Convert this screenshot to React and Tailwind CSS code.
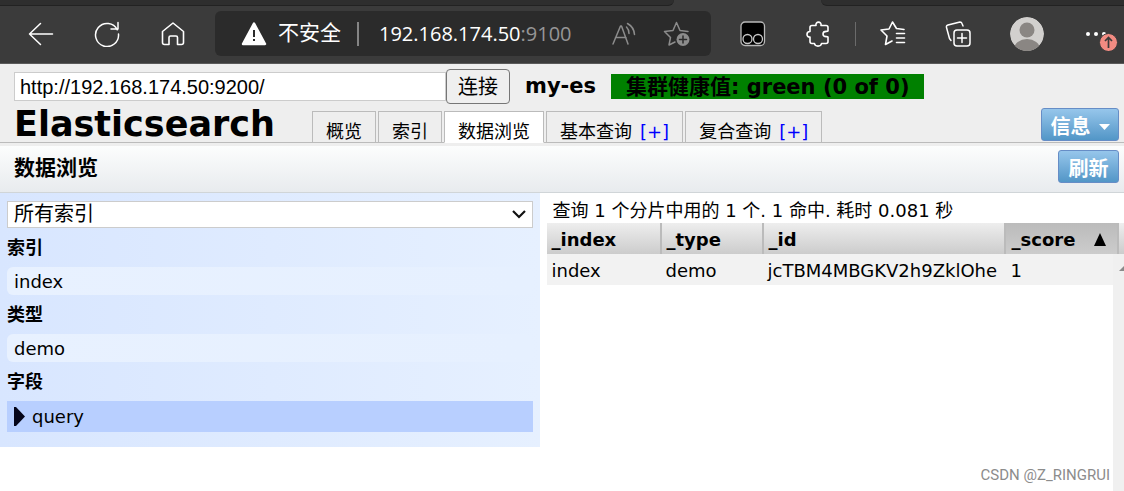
import React from "react";

function BarButton({ label, className = "", children }) {
  return (
    <button type="button" aria-label={label} className={`flex shrink-0 items-center justify-center ${className}`}>
      {children}
    </button>
  );
}

const line = { fill: "none", stroke: "currentColor", strokeLinecap: "round", strokeLinejoin: "round" };

function BrowserBar() {
  return (
    <div className="bg-[#3b3b3b] text-white border-b border-[#5a5a5a]">
      <div className="flex h-[6px] justify-between">
        <div className="w-[60%] rounded-br-md border-b border-[#222222] bg-[#2e2e2e]" />
        <div className="w-[27%] rounded-bl-md border-b border-[#222222] bg-[#2e2e2e]" />
      </div>
      <div className="flex h-[57px] items-center pb-[2px] pl-[28px] pr-[6px]">
        <BarButton label="后退" className="w-[26px]">
          <svg width="26" height="24" viewBox="0 0 26 24" {...line} strokeWidth="1.5"><path d="M24.5 12H1.5M12.5 1.5L1.5 12l11 10.500" /></svg>
        </BarButton>
        <BarButton label="刷新页面" className="ml-[40px] w-[26px]">
          <svg width="26" height="26" viewBox="0 0 26 26" {...line} strokeWidth="1.5"><path d="M23.300 8.800A11.500 11.500 0 1 0 24.500 13M24 1.500V8h-7" /></svg>
        </BarButton>
        <BarButton label="主页" className="ml-[40px] w-[26px]">
          <svg width="24" height="24" viewBox="0 0 24 24" {...line} strokeWidth="1.6"><path d="M1.500 9.500L12 1l10.500 8.500v11q0 2-2 2h-4v-7q0-1.500-1.500-1.500H9.500Q8 14 8 15.500v7H3.500q-2 0-2-2z" /></svg>
        </BarButton>
        <div className="ml-[29px] flex h-[45px] min-w-0 flex-1 items-center rounded-md bg-[#2b2b2b] pl-[26px] pr-[20px]">
          <svg width="26" height="24" viewBox="0 0 26 24" className="shrink-0"><path d="M13 1.500L24 22H2z" fill="#fff" stroke="#fff" strokeWidth="2.500" strokeLinejoin="round" /><path d="M13 8v7M13 17v2" stroke="#2b2b2b" strokeWidth="2" /></svg>
          <span className="ml-[11px] whitespace-nowrap text-[21px]">不安全</span>
          <span className="ml-[16px] h-[24px] w-[2px] bg-[#858585]" />
          <span className="ml-[20px] whitespace-nowrap font-['Open_Sans','Noto_Sans',sans-serif] text-[20px]">192.168.174.50<span className="text-[#969696]">:9100</span></span>
          <span className="flex-1" />
          <BarButton label="朗读此页内容" className="text-[#8c8c8c]">
            <svg width="26" height="24" viewBox="0 0 26 24" {...line} strokeWidth="1.500"><path d="M2 22L9.500 4h1L17 22M4.500 15.500h10.500M15.500 5q2.500 2.500 2.500 6.500M16.500 1.500q6.500 3.500 7 11" /></svg>
          </BarButton>
          <BarButton label="将此页添加到收藏夹" className="ml-[26px] text-[#8c8c8c]">
            <svg width="28" height="26" viewBox="0 0 28 26" {...line} strokeWidth="1.500"><path d="M25 10.500l-8-1L13.500 1.500 10 9.500l-8.500 1 6 6L6 24l6-3" /><circle cx="20" cy="18.500" r="6.500" fill="currentColor" stroke="none" /><path d="M16.500 18.500h7M20 15v7" stroke="#2b2b2b" /></svg>
          </BarButton>
        </div>
        <BarButton label="篡改猴" className="ml-[29px]">
          <svg width="26" height="26" viewBox="0 0 26 26"><rect x="1" y="1" width="23.500" height="23.500" rx="4" fill="#000" stroke="#b8b8b8" strokeWidth="1.300" /><g fill="none" stroke="#c8c8c8" strokeWidth="1.300"><circle cx="7.500" cy="18" r="4.500" /><circle cx="18" cy="18" r="4.500" /></g></svg>
        </BarButton>
        <BarButton label="扩展" className="ml-[40px]">
          <svg width="24" height="26" viewBox="0 0 24 26" {...line} strokeWidth="1.600"><path d="M6 4.500h4C9 0 16 0 15 4.500h5q2 0 2 2V10c-1 1-5-1-5 3s4 2 5 3v4.500q0 2-2 2h-4.500c-.5 3.500-6.500 3.500-7 0H6q-2 0-2-2v-4.500C0 16.500 0 10.500 4 10.500v-4q0-2 2-2z" /></svg>
        </BarButton>
        <span className="ml-[25px] h-[24px] w-px bg-[#6b6b6b]" />
        <BarButton label="收藏夹" className="ml-[24px]">
          <svg width="26" height="25" viewBox="0 0 26 25" {...line} strokeWidth="1.600"><path d="M24 8.500l-7.500-1L12.500 1 9 8 1 9l6 6-1.500 8.500 6.500-3.500M16.500 12.500h8M16.500 17h8M16.500 21.500h8" /></svg>
        </BarButton>
        <BarButton label="集锦" className="ml-[39px]">
          <svg width="26" height="26" viewBox="0 0 26 26" {...line} strokeWidth="1.500"><rect x="9" y="9" width="16" height="16" rx="3" /><path d="M17 12.500v9M12.500 17h9M18 5L17 2.500Q16.500 1 15 1L3 4Q1 4.500 1.500 6.500l3 11 1.500 2" /></svg>
        </BarButton>
        <BarButton label="个人资料" className="ml-[39px]">
          <svg width="34" height="34" viewBox="0 0 34 34"><clipPath id="avatar"><circle cx="17" cy="17" r="17" /></clipPath><g clipPath="url(#avatar)"><circle cx="17" cy="17" r="17" fill="#d2d0ce" /><circle cx="17" cy="13" r="7.500" fill="#8a8683" /><ellipse cx="17" cy="32" rx="13" ry="10" fill="#8a8683" /></g></svg>
        </BarButton>
        <BarButton label="设置及其他" className="ml-[40px]">
          <svg width="34" height="34" viewBox="0 0 34 34"><g fill="#fff"><circle cx="4" cy="17" r="2" /><circle cx="12" cy="17" r="2" /><circle cx="20" cy="17" r="2" /></g><circle cx="24.500" cy="25.500" r="9" fill="#f28b82" stroke="#3b3b3b" strokeWidth="1" /><path d="M24.500 31V20.500M21 24l3.500-3.500L28 24" fill="none" stroke="#3b3b3b" strokeWidth="1.700" /></svg>
        </BarButton>
      </div>
    </div>
  );
}

const tabs = [
  { name: "概览" },
  { name: "索引" },
  { name: "数据浏览", active: true },
  { name: "基本查询", plus: true },
  { name: "复合查询", plus: true },
];

const blueButton = "rounded-[3px] border border-[#668dc6] bg-linear-to-b from-[#96c6eb] to-[#5296c7] pt-[4px] text-[20px] leading-[28px] font-bold text-white";

function Header() {
  return (
    <header className="bg-[#eeeeee] pb-[3px]">
      <form className="flex h-[40px] items-center pl-[14px] pt-[5px]" onSubmit={(e) => e.preventDefault()}>
        <input aria-label="集群地址" defaultValue="http://192.168.174.50:9200/" className="h-[29px] w-[432px] border border-[#cccccc] bg-white px-[5px] font-['Liberation_Sans','Noto_Sans_CJK_SC',sans-serif] text-[20px] outline-none" />
        <button className="h-[35px] w-[64px] rounded-[4px] border border-[#767676] bg-[#efefef] text-[20px]">连接</button>
        <span className="ml-[15px] whitespace-nowrap text-[21px] font-bold">my-es</span>
        <span className="ml-[15px] h-[25px] whitespace-nowrap bg-[#008000] px-[15px] text-[21px] leading-[26px] font-bold">集群健康值: green (0 of 0)</span>
      </form>
      <div className="flex h-[39px] items-end border-b border-[#bbbbbb]">
        <h1 className="w-[312px] shrink-0 pl-[14px] text-[35px] leading-[36px] font-bold">Elasticsearch</h1>
        <nav className="-mb-px flex flex-1 gap-[2px]">
          {tabs.map((t) => (
            <div key={t.name} className={`flex h-[32px] items-start whitespace-nowrap border border-[#bbbbbb] px-[13px] pt-[6px] text-[18px] leading-[28px] ${t.active ? "border-b-white bg-white" : "bg-[#eeeeee]"}`}>
              <button type="button">{t.name}</button>
              {t.plus && <a href="#new" className="ml-[8px] text-[#0000ff]">[+]</a>}
            </div>
          ))}
        </nav>
        <button type="button" className={`mr-[5px] mb-px flex h-[33px] w-[78px] items-center justify-center gap-[8px] ${blueButton}`}>
          信息
          <svg width="11" height="6" viewBox="0 0 11 6"><path d="M0 0h11L5.500 6z" fill="#fff" /></svg>
        </button>
      </div>
    </header>
  );
}

function Filter({ title, value }) {
  return (
    <section>
      <h3 className="h-[39px] text-[18px] leading-[40px] font-bold">{title}</h3>
      <button type="button" className="block h-[28px] w-full rounded-[6px] bg-linear-to-r from-[#e8f1ff] to-[#e6f0ff] px-[7px] text-left text-[18px] leading-[30px]">{value}</button>
    </section>
  );
}

function Sidebar() {
  return (
    <aside className="w-[48%] shrink-0 self-start bg-linear-to-r from-[#d8e6ff] to-[#e6f0ff] px-[7px] pt-[8px] pb-[15px]">
      <div className="relative">
        <select aria-label="选择索引" className="block h-[27px] w-full appearance-none border border-[#cccccc] bg-white px-[6px] text-[20px] leading-[25px]">
          <option>所有索引</option>
        </select>
        <svg className="pointer-events-none absolute top-[9px] right-[7px]" width="14" height="9" viewBox="0 0 14 9" fill="none" stroke="#111" strokeWidth="2.200"><path d="M1 1l6 6 6-6" /></svg>
      </div>
      <Filter title="索引" value="index" />
      <Filter title="类型" value="demo" />
      <section>
        <h3 className="h-[39px] text-[18px] leading-[40px] font-bold">字段</h3>
        <button type="button" className="flex h-[31px] w-full items-center gap-[7px] bg-[#b8cfff] px-[7px] text-[18px]">
          <svg width="11" height="19" viewBox="0 0 11 19"><path d="M0 0h2l9 9.500L2 19H0z" fill="#05051a" /></svg>
          query
        </button>
      </section>
    </aside>
  );
}

const th = "border-r-2 border-[#bbbbbb] bg-linear-to-b from-[#eeeeee] to-[#cccccc] px-[5px] pt-[2px] text-left font-bold";

function Results() {
  return (
    <main className="flex min-w-0 flex-1 flex-col pl-[7px]">
      <p className="h-[30px] whitespace-nowrap px-[6px] text-[18px] leading-[36px]">查询 1 个分片中用的 1 个. 1 命中. 耗时 0.081 秒</p>
      <div className="relative flex-1">
        <table className="w-full table-fixed border-collapse text-[18px]">
          <colgroup>
            <col className="w-[114px]" />
            <col className="w-[102px]" />
            <col className="w-[242px]" />
            <col />
            <col className="w-[6px]" />
          </colgroup>
          <thead>
            <tr className="h-[31px]">
              <th className={th}>_index</th>
              <th className={th}>_type</th>
              <th className={th}>_id</th>
              <th className="whitespace-nowrap border-r-2 border-[#bbbbbb] bg-linear-to-b from-[#bbbbbb] to-[#cccccc] px-[6px] pt-[2px] text-left font-bold">
                <span className="flex items-center justify-between pr-[5px]">_score
                  <svg width="12" height="13" viewBox="0 0 12 13"><path d="M6 0l6 13H0z" fill="#000" /></svg>
                </span>
              </th>
              <th className="bg-linear-to-b from-[#eeeeee] to-[#cccccc] p-0" aria-label="滚动" />
            </tr>
          </thead>
          <tbody>
            <tr className="h-[31px] whitespace-nowrap bg-[#f2f2f2]">
              <td className="px-[5px] pt-[2px]">index</td>
              <td className="px-[5px] pt-[2px]">demo</td>
              <td className="px-[5px] pt-[2px]">jcTBM4MBGKV2h9ZklOhe</td>
              <td className="px-[6px] pt-[2px]">1</td>
              <td className="p-0" />
            </tr>
          </tbody>
        </table>
        <div className="absolute top-[31px] right-0 bottom-0 flex w-[11px] items-start justify-end bg-[#f0f0f0] pt-[12px]">
          <svg width="5" height="5" viewBox="0 0 5 5"><path d="M0 5l5-5v5z" fill="#8a8a8a" /></svg>
        </div>
        <span className="absolute right-[14px] bottom-[5px] whitespace-nowrap font-['Roboto',sans-serif] text-[15px] text-[#8c8c8c]">CSDN @Z_RINGRUI</span>
      </div>
    </main>
  );
}

export default function App() {
  return (
    <div className="flex min-h-screen flex-col overflow-x-hidden bg-white font-['DejaVu_Sans','Noto_Sans_CJK_SC',sans-serif] text-black">
      <BrowserBar />
      <Header />
      <div className="flex h-[47px] items-start justify-between border-b border-[#d0d5d8] bg-linear-to-b from-[#fcfdfd] to-[#e8ebee] pt-[4px] pr-[5px] pl-[14px]">
        <h2 className="text-[21px] leading-[36px] font-bold">数据浏览</h2>
        <button type="button" className={`h-[33px] w-[61px] ${blueButton}`}>刷新</button>
      </div>
      <div className="flex flex-1">
        <Sidebar />
        <Results />
      </div>
    </div>
  );
}
